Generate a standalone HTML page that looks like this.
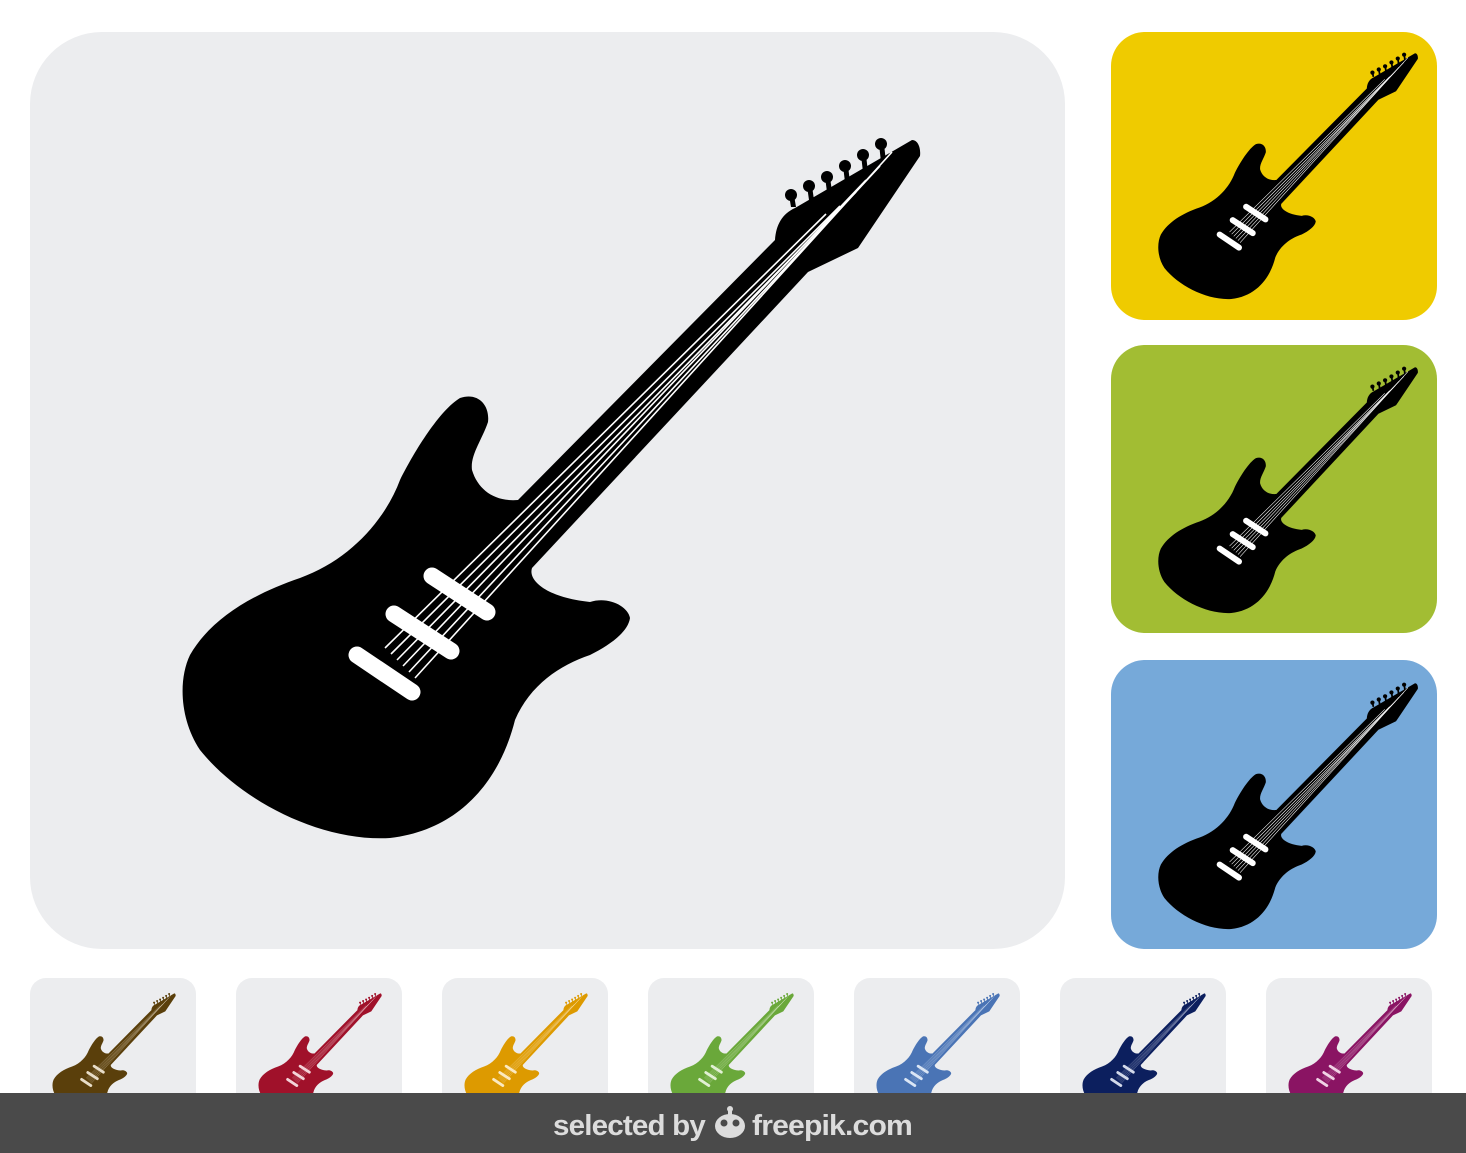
<!DOCTYPE html>
<html><head><meta charset="utf-8"><style>
html,body{margin:0;padding:0;background:#fff;width:1466px;height:1153px;overflow:hidden;}
svg{display:block}
</style></head><body>
<svg width="1466" height="1153" viewBox="0 0 1466 1153" xmlns="http://www.w3.org/2000/svg">
<defs>
<g id="gbody">
<path d="M518 500 L775 240 C776 225 782 214 795 208 L912 140 C918 140 921 148 920 156 L858 248 L808 272 L532 568 C528 580 545 597 590 602 C608 596 628 606 630 618 C628 632 610 645 590 655 C560 665 530 685 515 720 C500 780 460 830 390 838 C320 842 240 800 200 750 C180 720 178 680 190 655 C210 620 250 595 300 578 C350 560 385 520 400 480 C415 450 440 410 460 398 C478 392 490 405 488 422 C482 440 470 455 472 470 C478 490 495 502 518 500 Z"/>
<circle cx="791" cy="195" r="6"/><circle cx="809" cy="186" r="6"/><circle cx="827" cy="177" r="6"/><circle cx="845" cy="166" r="6"/><circle cx="863" cy="155" r="6"/><circle cx="881" cy="144" r="6"/>
<path d="M789 195 h5 l2 12 h-5 Z M807 186 h5 l2 14 h-5 Z M825 177 h5 l2 15 h-5 Z M843 166 h5 l2 16 h-5 Z M861 155 h5 l2 17 h-5 Z M879 144 h5 l2 18 h-5 Z"/>
</g>
<g id="gdeco">
<g stroke-width="1.6" fill="none">
<path d="M385 648 L826 214"/><path d="M391 654 L840 206"/><path d="M397 660 L856 192"/><path d="M403 666 L866 180"/><path d="M409 672 L880 166"/><path d="M415 678 L892 152"/>
</g>
<g stroke-width="17" stroke-linecap="round" fill="none">
<path d="M432 576 L487 612"/><path d="M394 614 L451 651"/><path d="M357 655 L412 692"/>
</g>
</g>
</defs>

<rect x="30" y="32" width="1035" height="917" rx="72" fill="#ecedef"/>
<use href="#gbody" fill="#000"/>
<g stroke="#fff"><use href="#gdeco"/></g>

<rect x="1111" y="32" width="326" height="288" rx="34" fill="#efcb00"/>
<rect x="1111" y="345" width="326" height="288" rx="34" fill="#a2bd33"/>
<rect x="1111" y="660" width="326" height="289" rx="34" fill="#76a9d9"/>
<g transform="translate(1094 4) scale(0.352)"><use href="#gbody" fill="#000"/><g stroke="#fff"><use href="#gdeco"/></g></g>
<g transform="translate(1094 318) scale(0.352)"><use href="#gbody" fill="#000"/><g stroke="#fff"><use href="#gdeco"/></g></g>
<g transform="translate(1094 634) scale(0.352)"><use href="#gbody" fill="#000"/><g stroke="#fff"><use href="#gdeco"/></g></g>

<g>
<rect x="30" y="978" width="166" height="150" rx="16" fill="#ecedef"/>
<rect x="236" y="978" width="166" height="150" rx="16" fill="#ecedef"/>
<rect x="442" y="978" width="166" height="150" rx="16" fill="#ecedef"/>
<rect x="648" y="978" width="166" height="150" rx="16" fill="#ecedef"/>
<rect x="854" y="978" width="166" height="150" rx="16" fill="#ecedef"/>
<rect x="1060" y="978" width="166" height="150" rx="16" fill="#ecedef"/>
<rect x="1266" y="978" width="166" height="150" rx="16" fill="#ecedef"/>
</g>
<g transform="translate(22 970) scale(0.167)"><use href="#gbody" fill="#5a3f0b"/><g stroke="#e8ddc8"><use href="#gdeco"/></g></g>
<g transform="translate(228 970) scale(0.167)"><use href="#gbody" fill="#a0112a"/><g stroke="#f3d4d9"><use href="#gdeco"/></g></g>
<g transform="translate(434 970) scale(0.167)"><use href="#gbody" fill="#dd9a00"/><g stroke="#fbe9c0"><use href="#gdeco"/></g></g>
<g transform="translate(640 970) scale(0.167)"><use href="#gbody" fill="#6aa83a"/><g stroke="#e1f0d4"><use href="#gdeco"/></g></g>
<g transform="translate(846 970) scale(0.167)"><use href="#gbody" fill="#4a74b5"/><g stroke="#dbe6f5"><use href="#gdeco"/></g></g>
<g transform="translate(1052 970) scale(0.167)"><use href="#gbody" fill="#0c1f5e"/><g stroke="#d3d9ea"><use href="#gdeco"/></g></g>
<g transform="translate(1258 970) scale(0.167)"><use href="#gbody" fill="#8a1463"/><g stroke="#f0d3e5"><use href="#gdeco"/></g></g>

<rect x="0" y="1093" width="1466" height="60" fill="#4a4a4a"/>
<text x="553" y="1135" font-family="Liberation Sans, sans-serif" font-size="29" font-weight="bold" fill="#dcdcdc" letter-spacing="-0.8" textLength="152" lengthAdjust="spacingAndGlyphs">selected by</text>
<g fill="#dcdcdc"><ellipse cx="730" cy="1126" rx="15" ry="12"/><circle cx="730" cy="1109" r="3"/><rect x="728" y="1109" width="4" height="6"/></g>
<g fill="#4a4a4a"><circle cx="724" cy="1123" r="3.5"/><circle cx="736" cy="1123" r="3.5"/></g>
<text x="752" y="1135" font-family="Liberation Sans, sans-serif" font-size="29" font-weight="bold" fill="#dcdcdc" letter-spacing="-0.8" textLength="160" lengthAdjust="spacingAndGlyphs">freepik.com</text>
</svg>
</body></html>
